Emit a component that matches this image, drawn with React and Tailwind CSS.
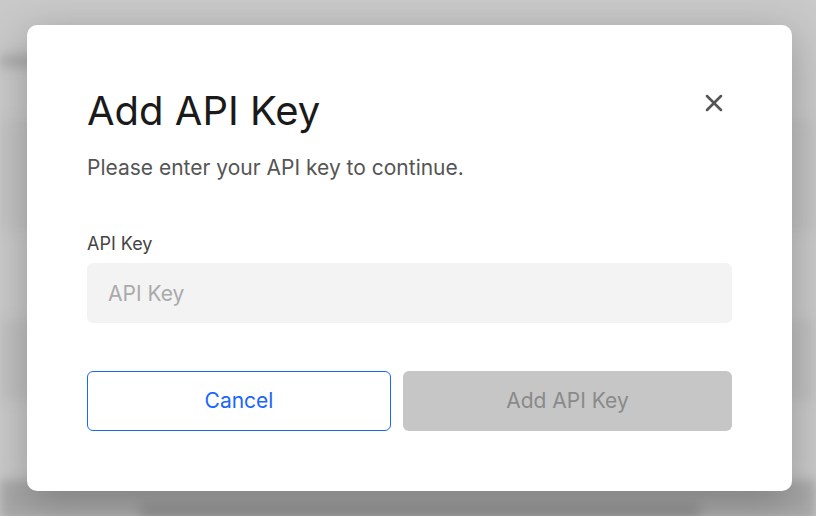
import { X } from "lucide-react";

export default function App() {
  return (
    <div
      className="relative h-[516px] w-[816px] overflow-hidden bg-[#c9c9c9]"
      style={{ fontFamily: "Inter, 'Liberation Sans', sans-serif" }}
    >
      {/* blurred page behind the overlay */}
      <div className="absolute inset-0 blur-[6px]">
        <div className="absolute left-0 top-[55px] h-[12px] w-[40px] bg-[#a9a9a9]" />
        <div className="absolute left-0 top-[120px] h-[110px] w-[816px] bg-[#c2c2c2]" />
        <div className="absolute left-0 top-[320px] h-[80px] w-[816px] bg-[#c0c0c0]" />
        <div className="absolute left-0 top-[480px] h-[40px] w-[816px] bg-[#a6a6a6]" />
        <div className="absolute left-[140px] top-[505px] h-[14px] w-[560px] bg-[#8e8e8e]" />
      </div>

      <div className="relative pl-[27px] pt-[25px]">
        <div className="flex h-[466px] w-[765px] flex-col rounded-[10px] bg-white px-[60px] pt-[62px] shadow-[0_10px_40px_rgba(0,0,0,0.25)]">
          <div className="flex items-start justify-between">
            <h2 className="text-[40px] leading-[48px] font-normal text-[#1a1a1a]">Add API Key</h2>
            <button className="mr-[4px] mt-[2px] text-[#555]">
              <X size={28} strokeWidth={2.2} />
            </button>
          </div>
          <p className="mt-[19px] text-[21px] leading-[28px] text-[#555]">
            Please enter your API key to continue.
          </p>

          <label className="mt-[51px] text-[18px] leading-[22px] text-[#444]">API Key</label>
          <input
            placeholder="API Key"
            className="mt-[8px] h-[60px] w-full rounded-[6px] bg-[#f3f3f3] px-[21px] text-[21px] text-[#333] outline-none placeholder:text-[#aaa]"
          />

          <div className="mt-[48px] flex gap-[12px]">
            <button className="h-[60px] w-[304px] rounded-[6px] border border-[#1a66ff] bg-white text-[21px] text-[#1a66ff]">
              Cancel
            </button>
            <button
              disabled
              className="h-[60px] flex-1 rounded-[6px] bg-[#c6c6c6] text-[21px] text-[#8a8a8a]"
            >
              Add API Key
            </button>
          </div>
        </div>
      </div>
    </div>
  );
}
